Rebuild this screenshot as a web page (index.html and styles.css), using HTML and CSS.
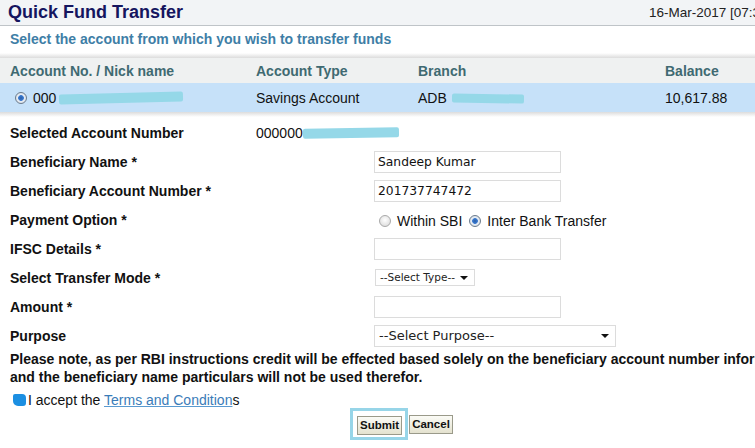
FILE: index.html
```html
<!DOCTYPE html>
<html>
<head>
<meta charset="utf-8">
<link rel="stylesheet" href="styles.css">
</head>
<body>
<div class="page">
  <div class="titlebar">
    <div class="title">Quick Fund Transfer</div>
    <div class="date">16-Mar-2017 [07:39 PM IST]</div>
  </div>
  <div class="subhead">Select the account from which you wish to transfer funds</div>
  <div class="shadow"></div>
  <div class="acct-table">
    <div class="row head">
      <div class="c1">Account No. / Nick name</div>
      <div>Account Type</div>
      <div>Branch</div>
      <div>Balance</div>
    </div>
    <div class="row data">
      <div class="c1"><span class="radio on small"></span><span class="acno">000<span class="scrib scrib1"></span></span></div>
      <div>Savings Account</div>
      <div>ADB <span class="scrib scrib2"></span></div>
      <div>10,617.88</div>
    </div>
  </div>
  <div class="shadow2"></div>

  <div class="form">
    <div class="frow">
      <div class="lbl">Selected Account Number</div>
      <div class="val">000000<span class="scrib scrib3"></span></div>
    </div>
    <div class="frow">
      <div class="lbl">Beneficiary Name *</div>
      <div class="ctl"><div class="input">Sandeep Kumar</div></div>
    </div>
    <div class="frow">
      <div class="lbl">Beneficiary Account Number *</div>
      <div class="ctl"><div class="input">201737747472</div></div>
    </div>
    <div class="frow">
      <div class="lbl">Payment Option *</div>
      <div class="ctl radios">
        <span class="radio"></span><span class="rtext">Within SBI</span>
        <span class="radio on"></span><span class="rtext">Inter Bank Transfer</span>
      </div>
    </div>
    <div class="frow">
      <div class="lbl">IFSC Details *</div>
      <div class="ctl"><div class="input"></div></div>
    </div>
    <div class="frow">
      <div class="lbl">Select Transfer Mode *</div>
      <div class="ctl"><div class="select small-sel">--Select Type--<span class="arrow"></span></div></div>
    </div>
    <div class="frow">
      <div class="lbl">Amount *</div>
      <div class="ctl"><div class="input"></div></div>
    </div>
    <div class="frow">
      <div class="lbl">Purpose</div>
      <div class="ctl"><div class="select big-sel">--Select Purpose--<span class="arrow"></span></div></div>
    </div>
  </div>

  <div class="note">
    <div>Please note, as per RBI instructions credit will be effected based solely on the beneficiary account number information</div>
    <div>and the beneficiary name particulars will not be used therefor.</div>
  </div>

  <div class="accept">
    <span class="check"></span><span>I accept the <a class="terms">Terms and Condition</a>s</span>
  </div>

  <div class="buttons">
    <div class="hl"><div class="btn">Submit</div></div>
    <div class="btn">Cancel</div>
  </div>
</div>
</body>
</html>
```

FILE: styles.css
```css
html, body {
  margin: 0;
  padding: 0;
  background: #ffffff;
  overflow: hidden;
}
body {
  width: 755px;
  height: 448px;
  font-family: "Liberation Sans", Arial, sans-serif;
  color: #111;
}
.page {
  width: 755px;
  overflow: hidden;
}
.titlebar {
  height: 25px;
  background: #f2f4f6;
  border-bottom: 1px solid #bfc4c8;
  display: flex;
  justify-content: space-between;
  align-items: center;
  padding-left: 8px;
  white-space: nowrap;
  overflow: hidden;
}
.title {
  font-weight: bold;
  font-size: 18px;
  color: #15155f;
}
.date {
  font-size: 13.5px;
  color: #222;
  width: 106px;
  overflow: hidden;
  flex-shrink: 0;
}
.subhead {
  height: 27px;
  line-height: 27px;
  padding-left: 10px;
  font-weight: bold;
  font-size: 14px;
  color: #3e7ea6;
}
.shadow {
  height: 5px;
  background: linear-gradient(#ffffff, #dcdcdc);
}
.acct-table {
  font-size: 14px;
}
.row {
  display: grid;
  grid-template-columns: 246px 162px 247px 1fr;
  padding-left: 10px;
  align-items: center;
  white-space: nowrap;
}
.row.head {
  height: 25px;
  background: #eff1f1;
  font-weight: bold;
  color: #3f6a72;
  font-size: 14px;
}
.row.data {
  height: 29px;
  background: #c6e1f9;
  color: #111;
}
.c1 {
  display: flex;
  align-items: center;
}
.radio {
  display: inline-block;
  width: 12px;
  height: 12px;
  border-radius: 50%;
  border: 1px solid #a9a9a9;
  background: radial-gradient(circle at 50% 40%, #ffffff, #d6d6d6);
  box-sizing: border-box;
  vertical-align: middle;
  position: relative;
}
.radio.on {
  border-color: #6b7b8c;
  background: radial-gradient(circle at 50% 50%, #2b5fa8 0, #3a7ad0 2.5px, #e8eef5 3.2px, #cfd6de 100%);
}
.radio.small {
  margin-left: 5px;
  margin-right: 6px;
}
.acno {
  display: flex;
  align-items: center;
}
.scrib {
  display: inline-block;
  background: #95d8e8;
  vertical-align: middle;
  border-radius: 2px;
}
.scrib1 {
  width: 124px;
  height: 10px;
  margin-left: 3px;
  transform: rotate(-1.5deg);
}
.scrib2 {
  width: 72px;
  height: 9px;
  margin-left: 1px;
  transform: rotate(1deg);
}
.shadow2 {
  height: 5px;
  background: linear-gradient(#dcdcdc, #ffffff);
}
.form {
  padding-top: 1px;
  font-size: 14px;
}
.frow {
  display: grid;
  grid-template-columns: 246px 118px 1fr;
  height: 29px;
  align-items: center;
  padding-left: 10px;
}
.lbl {
  font-weight: bold;
  color: #111;
  white-space: nowrap;
}
.val {
  grid-column: 2 / 4;
  color: #111;
  display: flex;
  align-items: center;
}
.scrib3 {
  width: 96px;
  height: 10px;
  transform: rotate(-1deg);
}
.ctl {
  grid-column: 3;
  display: flex;
  align-items: center;
}
.input {
  width: 187px;
  height: 22px;
  box-sizing: border-box;
  border: 1px solid #dcdcdc;
  font-family: "DejaVu Sans", Tahoma, sans-serif;
  font-size: 12.3px;
  line-height: 20px;
  padding-left: 3px;
  color: #111;
}
.radios {
  padding-left: 5px;
  padding-top: 3px;
}
.rtext {
  margin-left: 6px;
  margin-right: 7px;
  color: #111;
}
.select {
  position: relative;
  box-sizing: border-box;
  border: 1px solid #dcdcdc;
  background: #fff;
  font-family: "DejaVu Sans", Tahoma, sans-serif;
  color: #222;
}
.small-sel {
  width: 100px;
  height: 17px;
  font-size: 10.5px;
  line-height: 15px;
  padding-left: 4px;
  margin-left: 1px;
}
.big-sel {
  width: 242px;
  height: 22px;
  font-size: 13px;
  line-height: 20px;
  padding-left: 4px;
}
.arrow {
  position: absolute;
  right: 6px;
  top: 50%;
  margin-top: -2px;
  width: 0;
  height: 0;
  border-left: 4px solid transparent;
  border-right: 4px solid transparent;
  border-top: 4px solid #111;
}
.note {
  padding-left: 10px;
  font-weight: bold;
  font-size: 14px;
  line-height: 18px;
  white-space: nowrap;
  color: #111;
}
.accept {
  display: flex;
  align-items: center;
  padding-left: 13px;
  margin-top: 4px;
  height: 20px;
  font-size: 14px;
  color: #111;
}
.check {
  display: inline-block;
  width: 13px;
  height: 12px;
  background: #1c8fe2;
  border-radius: 2px 4px 3px 5px;
  margin-right: 2px;
}
.terms {
  color: #3a7cb8;
  text-decoration: underline;
  text-decoration-color: #5a9ad0;
}
.buttons {
  display: flex;
  align-items: center;
  padding-left: 350px;
  margin-top: -2px;
}
.hl {
  border: 3px solid #97d5e8;
  padding: 5px 3px 3px 4px;
  width: 58px;
  height: 32px;
  box-sizing: border-box;
  display: flex;
  align-items: center;
}
.btn {
  font-family: "Liberation Sans", Arial, sans-serif;
  font-weight: bold;
  font-size: 11.5px;
  height: 19px;
  line-height: 17px;
  box-sizing: border-box;
  border: 1px solid #9a9a8a;
  background: linear-gradient(#fbfbf6, #e4e2cf);
  color: #111;
  text-align: center;
}
.hl .btn {
  width: 45px;
}
.buttons > .btn {
  width: 44px;
  margin-left: 1px;
}
```
